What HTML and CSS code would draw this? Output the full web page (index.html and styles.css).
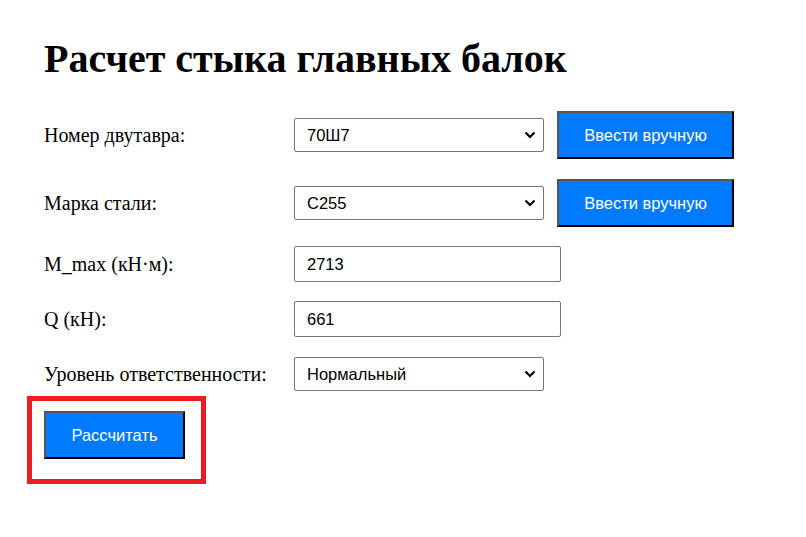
FILE: index.html
```html
<!DOCTYPE html>
<html lang="ru">
<head>
<meta charset="utf-8">
<title>Расчет стыка главных балок</title>
<link rel="stylesheet" href="styles.css">
</head>
<body>
<div class="page">
  <h1 class="title">Расчет стыка главных балок</h1>
  <form class="form">
    <div class="row">
      <label class="label">Номер двутавра:</label>
      <div class="select-box">
        <select class="select"><option>70Ш7</option></select>
        <svg class="chev" width="12" height="8" viewBox="0 0 12 8"><path d="M1.5 1.5 L6 6 L10.5 1.5" fill="none" stroke="#000" stroke-width="2.2"/></svg>
      </div>
      <button type="button" class="btn btn-side">Ввести вручную</button>
    </div>
    <div class="row">
      <label class="label">Марка стали:</label>
      <div class="select-box">
        <select class="select"><option>С255</option></select>
        <svg class="chev" width="12" height="8" viewBox="0 0 12 8"><path d="M1.5 1.5 L6 6 L10.5 1.5" fill="none" stroke="#000" stroke-width="2.2"/></svg>
      </div>
      <button type="button" class="btn btn-side">Ввести вручную</button>
    </div>
    <div class="row row-tight">
      <label class="label">M_max (кН·м):</label>
      <input class="input" type="text" value="2713">
    </div>
    <div class="row row-tight">
      <label class="label">Q (кН):</label>
      <input class="input" type="text" value="661">
    </div>
    <div class="row">
      <label class="label">Уровень ответственности:</label>
      <div class="select-box">
        <select class="select"><option>Нормальный</option></select>
        <svg class="chev" width="12" height="8" viewBox="0 0 12 8"><path d="M1.5 1.5 L6 6 L10.5 1.5" fill="none" stroke="#000" stroke-width="2.2"/></svg>
      </div>
    </div>
    <div class="submit-wrap">
      <button type="button" class="btn btn-calc">Рассчитать</button>
      <span class="highlight"></span>
    </div>
  </form>
</div>
</body>
</html>
```

FILE: styles.css
```css
html, body {
  margin: 0;
  background: #fff;
}
body {
  font-family: "Liberation Serif", "Times New Roman", serif;
  color: #000;
}
.page {
  padding: 0 44px;
  min-height: 537px;
  box-sizing: border-box;
}
.title {
  font-size: 40px;
  font-weight: bold;
  margin: 0;
  padding-top: 37px;
  line-height: 44px;
  margin-bottom: 30px;
}
.form {
  display: flex;
  flex-direction: column;
  gap: 20px;
}
.row {
  display: flex;
  align-items: center;
  min-height: 34px;
}
.row-tight {
  margin-top: -1px;
}
.label {
  width: 250px;
  font-size: 20px;
}
.select-box {
  position: relative;
  width: 250px;
  height: 34px;
}
.select {
  appearance: none;
  -webkit-appearance: none;
  width: 250px;
  height: 34px;
  box-sizing: border-box;
  font-family: "Liberation Sans", Arial, sans-serif;
  font-size: 16.5px;
  padding: 0 30px 0 12px;
  border: 1px solid #767676;
  border-radius: 2px;
  background: #fff;
  color: #000;
  margin: 0;
}
.chev {
  position: absolute;
  right: 8px;
  top: 13px;
  pointer-events: none;
}
.input {
  width: 267px;
  height: 36px;
  box-sizing: border-box;
  font-family: "Liberation Sans", Arial, sans-serif;
  font-size: 16.5px;
  padding: 0 12px;
  border: 1px solid #767676;
  border-radius: 2px;
  color: #000;
  margin: 0;
}
.btn {
  font-family: "Liberation Sans", Arial, sans-serif;
  font-size: 16.5px;
  color: #fff;
  background: #007bff;
  border: 2px solid;
  border-color: #555 #000 #000 #555;
  height: 48px;
  box-sizing: border-box;
  cursor: pointer;
  padding: 0;
}
.btn-side {
  margin-left: 13px;
  width: 177px;
}
.btn-calc {
  width: 141px;
}
.submit-wrap {
  position: relative;
  width: 141px;
  height: 48px;
}
.highlight {
  position: absolute;
  left: -17px;
  top: -15px;
  width: 179px;
  height: 88px;
  box-sizing: border-box;
  border: 5px solid #ed1c24;
  pointer-events: none;
}
```
